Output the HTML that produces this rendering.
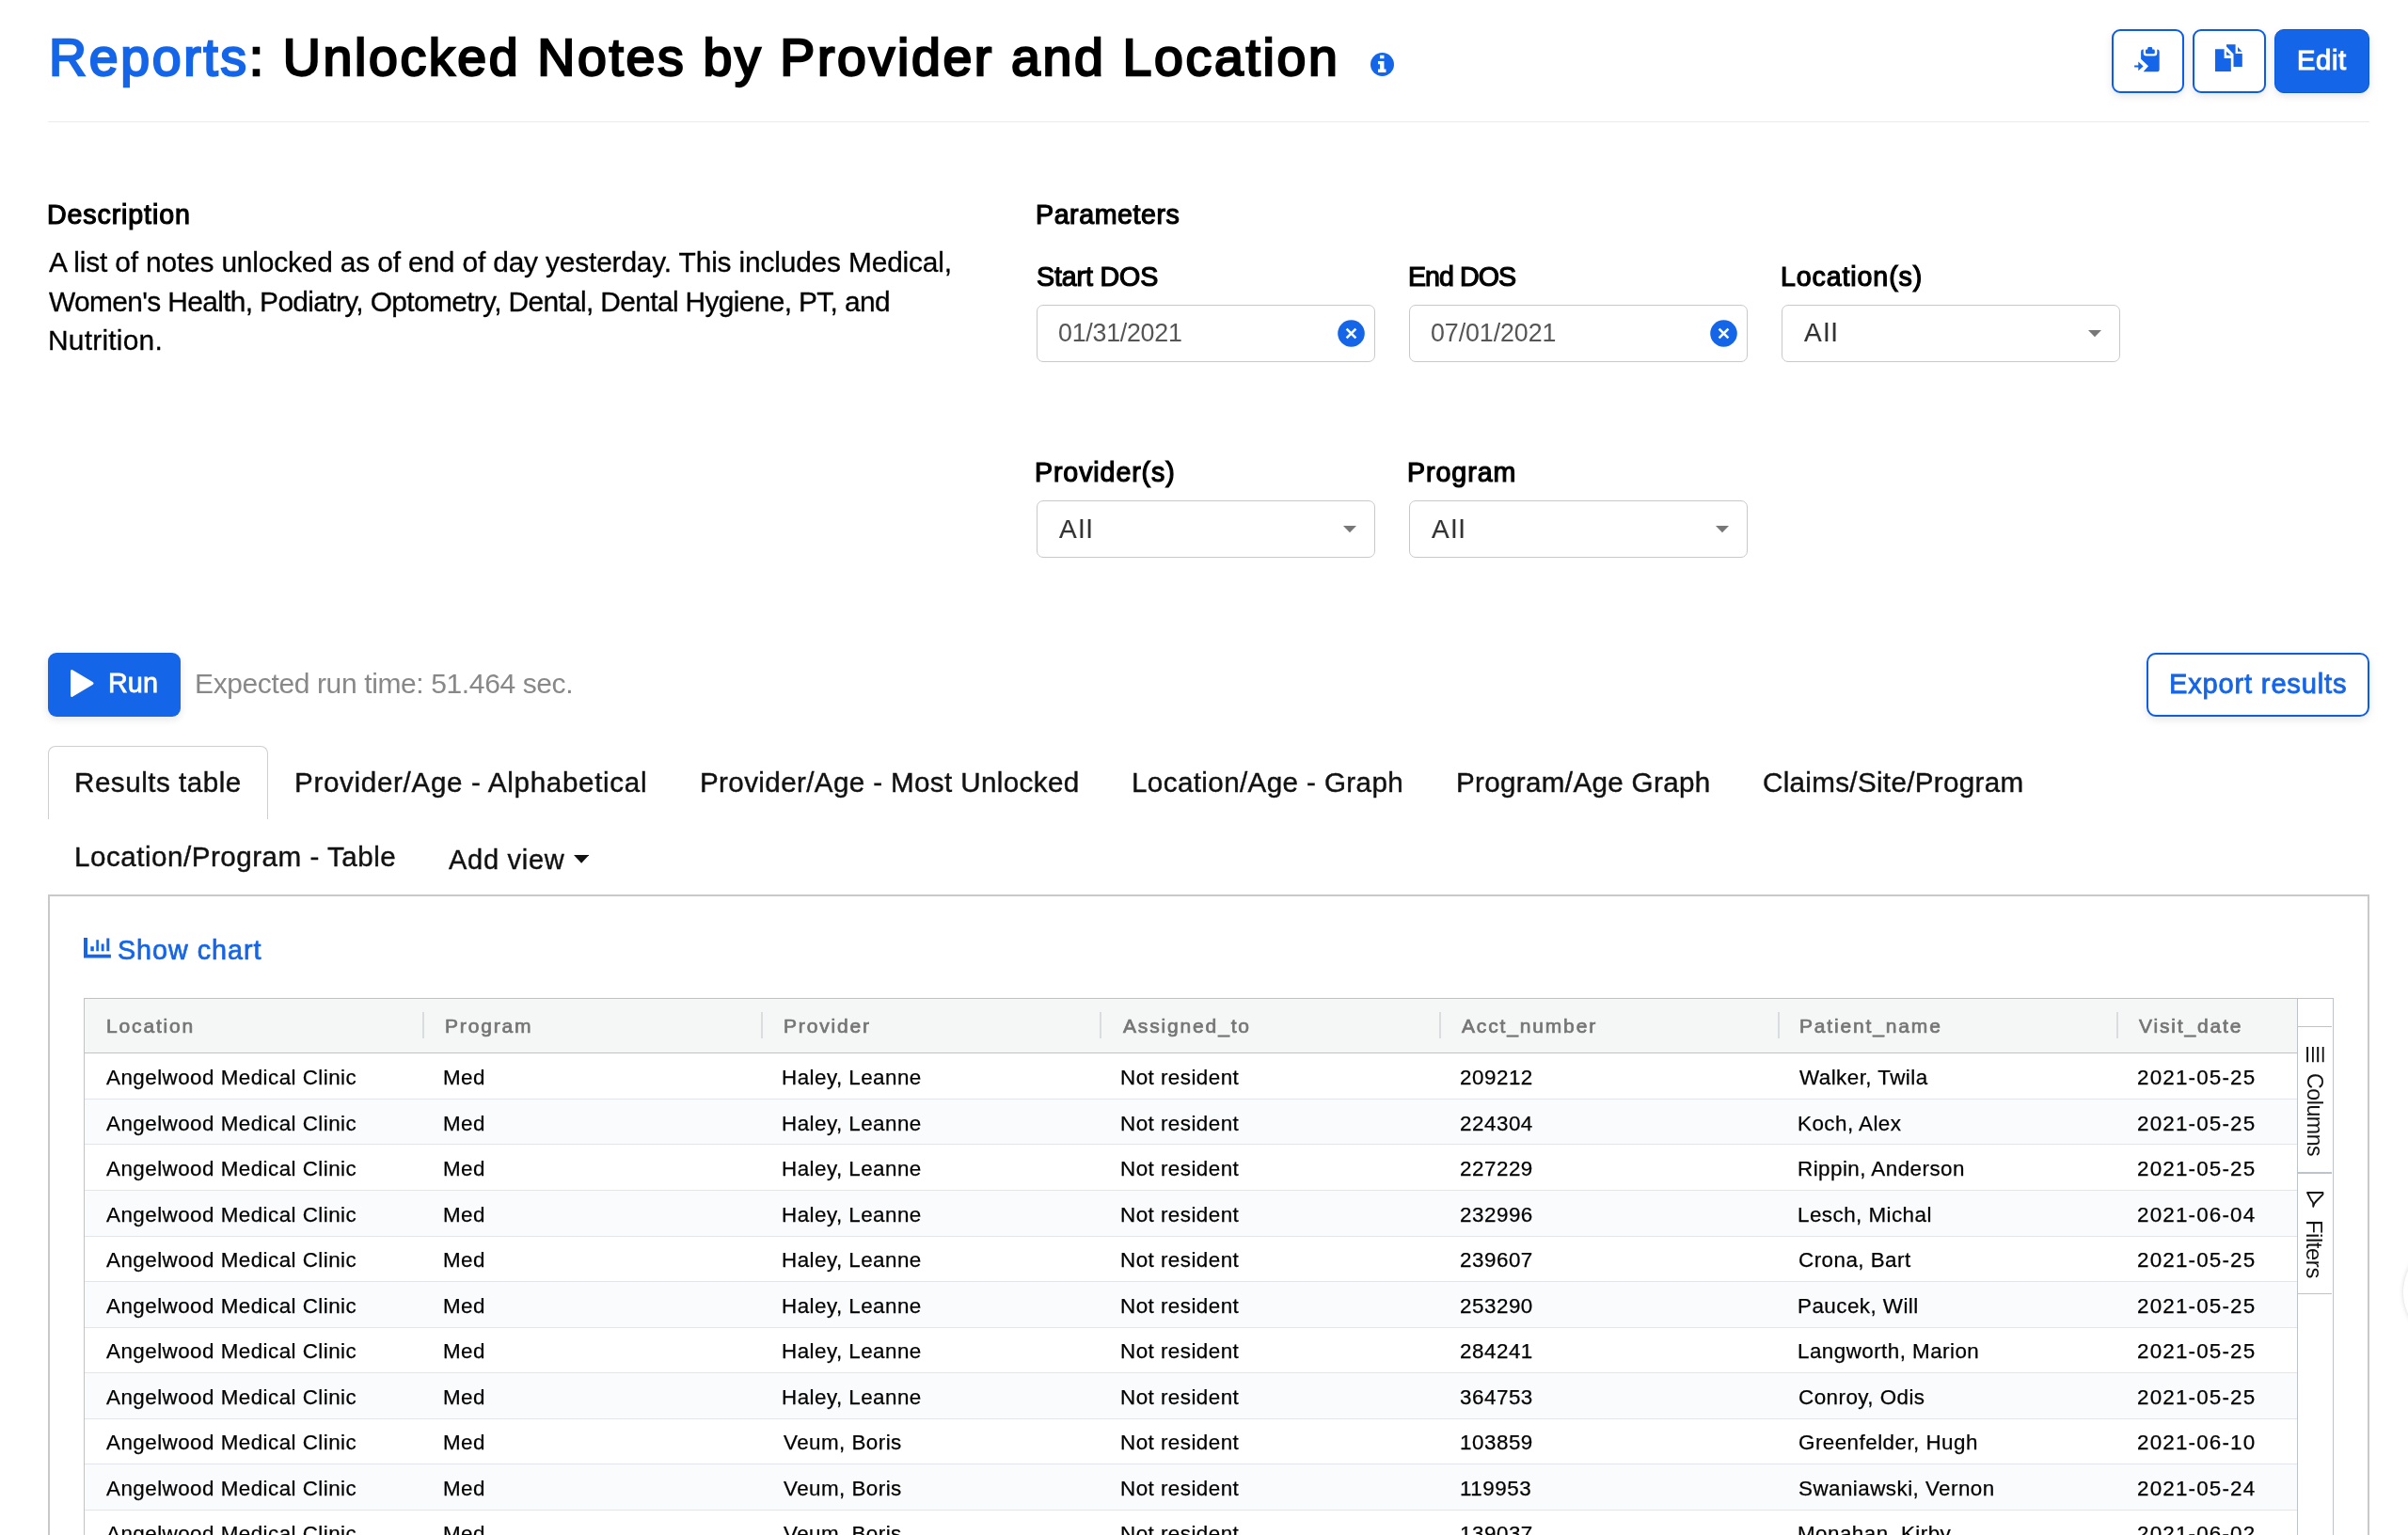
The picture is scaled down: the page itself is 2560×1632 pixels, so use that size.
<!DOCTYPE html>
<html><head><meta charset='utf-8'><style>
html,body{margin:0;padding:0}
body{width:2560px;height:1632px;overflow:hidden;position:relative;background:#fff;font-family:"Liberation Sans",sans-serif}
.t{position:absolute;white-space:pre;font-family:"Liberation Sans",sans-serif;will-change:transform}
</style></head><body>
<div style='position:absolute;left:51px;top:129px;width:2468px;height:1px;background:#ebebeb'></div>
<svg style='position:absolute;left:1457px;top:56px' width='25' height='25' viewBox='0 0 24.4 24.4'>
<circle cx='12.2' cy='12.2' r='12.2' fill='#1565e8'/>
<path fill='#fff' d='M9.8 2.8h4.3v3.4H9.8z M7.8 8.8h6.3v8.4h2v3.2H7.8v-3.2h2v-5.2h-2z'/></svg>
<div style='position:absolute;left:2245px;top:31px;width:73px;height:64px;border:2px solid #0b5ce6;border-radius:9px;background:#fff;box-shadow:0 3px 8px rgba(0,0,0,0.10)'></div>
<div style='position:absolute;left:2331px;top:31px;width:74px;height:64px;border:2px solid #0b5ce6;border-radius:9px;background:#fff;box-shadow:0 3px 8px rgba(0,0,0,0.10)'></div>
<div style='position:absolute;left:2418px;top:31px;width:99px;height:66px;border:1px solid #0a58d6;border-radius:10px;background:#1565e8;box-shadow:0 3px 8px rgba(0,0,0,0.10)'></div>
<svg style='position:absolute;left:2269px;top:49.5px' width='27' height='27' viewBox='0 0 27 27'>
<path fill='#1565e8' d='M9.7 2.6V6.6A3 3 0 0 0 12.7 9.6H21.3A3 3 0 0 0 24.3 6.6V2.6A2.4 2.4 0 0 1 26.7 5V24A2.3 2.3 0 0 1 24.4 26.3H9.6L15 20.3L7.1 12.8V5A2.4 2.4 0 0 1 9.7 2.6Z'/>
<path fill='#1565e8' d='M13.2 2.6H14.2V1.4A1.4 1.4 0 0 1 15.6 0H17.8A1.4 1.4 0 0 1 19.2 1.4V2.6H20.4A1.4 1.4 0 0 1 21.8 4V5.9A1.4 1.4 0 0 1 20.4 7.3H13.4A1.4 1.4 0 0 1 12 5.9V3.8A1.2 1.2 0 0 1 13.2 2.6Z'/>
<path fill='#1565e8' d='M0.1 19.4H6.2V21.6H0.1Z M4.3 15.6L9.6 20.5L4.3 25.3Z'/></svg>
<svg style='position:absolute;left:2355.3px;top:47px' width='29' height='29' viewBox='0 0 29 29'>
<path fill='#1565e8' d='M0 5.2H9.6V15.1H16.8V29H0Z M12 7.8L16.7 11.8H12Z'/>
<path fill='#1565e8' d='M12 0.3H21.6V9.9H28.8V24H19.5V10.5L12 2.4Z M24 3.1L28.5 7.8H24Z'/></svg>
<div style='position:absolute;border:1px solid #c9c9c9;border-radius:7px;background:#fff;box-sizing:border-box;left:1102px;top:324px;width:360px;height:61px'></div>
<div style='position:absolute;border:1px solid #c9c9c9;border-radius:7px;background:#fff;box-sizing:border-box;left:1498px;top:324px;width:360px;height:61px'></div>
<div style='position:absolute;border:1px solid #c9c9c9;border-radius:7px;background:#fff;box-sizing:border-box;left:1894px;top:324px;width:360px;height:61px'></div>
<div style='position:absolute;border:1px solid #c9c9c9;border-radius:7px;background:#fff;box-sizing:border-box;left:1102px;top:532px;width:360px;height:61px'></div>
<div style='position:absolute;border:1px solid #c9c9c9;border-radius:7px;background:#fff;box-sizing:border-box;left:1498px;top:532px;width:360px;height:61px'></div>
<svg style='position:absolute;left:1422.0px;top:340px' width='29' height='29' viewBox='0 0 29 29'>
<circle cx='14.5' cy='14.5' r='14.3' fill='#1565e8'/><path d='M9.6 9.6L19.4 19.4M19.4 9.6L9.6 19.4' stroke='#fff' stroke-width='2.6'/></svg>
<svg style='position:absolute;left:1818.0px;top:340px' width='29' height='29' viewBox='0 0 29 29'>
<circle cx='14.5' cy='14.5' r='14.3' fill='#1565e8'/><path d='M9.6 9.6L19.4 19.4M19.4 9.6L9.6 19.4' stroke='#fff' stroke-width='2.6'/></svg>
<svg style='position:absolute;left:2219.8px;top:351px' width='14' height='7.5' viewBox='0 0 14 7.5'><path d='M0 0H14L7 7.3Z' fill='#777'/></svg>
<svg style='position:absolute;left:1427.8px;top:559.2px' width='14' height='7.5' viewBox='0 0 14 7.5'><path d='M0 0H14L7 7.3Z' fill='#777'/></svg>
<svg style='position:absolute;left:1823.8px;top:559.2px' width='14' height='7.5' viewBox='0 0 14 7.5'><path d='M0 0H14L7 7.3Z' fill='#777'/></svg>
<svg style='position:absolute;left:609.9px;top:909.2px' width='16.2' height='9' viewBox='0 0 16.2 9'><path d='M0 0H16.2L8.1 8.8Z' fill='#111'/></svg>
<div style='position:absolute;left:51px;top:694px;width:141px;height:68px;border-radius:9px;background:#1565e8;box-shadow:0 3px 8px rgba(0,0,0,0.10)'></div>
<svg style='position:absolute;left:74px;top:711px' width='27' height='31' viewBox='0 0 27 31'><path d='M3.5 1.5 Q1 0 1 3 V28 Q1 31 3.5 29.5 L24.5 17 Q26.5 15.5 24.5 14 Z' fill='#fff'/></svg>
<div style='position:absolute;left:2282px;top:694px;width:233px;height:64px;border:2px solid #0b5ce6;border-radius:10px;background:#fff;box-shadow:0 3px 8px rgba(0,0,0,0.10)'></div>
<div style='position:absolute;left:51px;top:793px;width:232px;height:90px;border:1px solid #cfcfcf;border-bottom:none;border-radius:8px 8px 0 0;background:#fff'></div>
<div style='position:absolute;left:40px;top:871px;width:260px;height:30px;background:#fff'></div>
<div style='position:absolute;left:51px;top:951px;width:2464px;height:800px;border:2px solid #c9c9c9;background:#fff'></div>
<svg style='position:absolute;left:88.9px;top:997px' width='29' height='22' viewBox='0 0 29 22'>
<path fill='#1565e8' d='M0 0H4V17.8H28.9V21.6H0Z M7.3 9.2H10.8V14.3H7.3Z M13.3 2.2H15.9V14.3H13.3Z M18.7 6.5H21.6V14.3H18.7Z M24.3 0.5H27.3V14.3H24.3Z'/></svg>
<div style='position:absolute;left:89px;top:1061px;width:2390px;height:700px;border:1px solid #bdc3c8;background:#fff'></div>
<div style='position:absolute;left:90px;top:1062px;width:2352px;height:57px;background:#f5f6f6'></div>
<div style='position:absolute;left:90px;top:1119px;width:2352px;height:1px;background:#bdc3c8'></div>
<div style='position:absolute;left:449px;top:1076px;width:2px;height:28px;background:#d9dde0'></div>
<div style='position:absolute;left:809px;top:1076px;width:2px;height:28px;background:#d9dde0'></div>
<div style='position:absolute;left:1169px;top:1076px;width:2px;height:28px;background:#d9dde0'></div>
<div style='position:absolute;left:1530px;top:1076px;width:2px;height:28px;background:#d9dde0'></div>
<div style='position:absolute;left:1890px;top:1076px;width:2px;height:28px;background:#d9dde0'></div>
<div style='position:absolute;left:2250px;top:1076px;width:2px;height:28px;background:#d9dde0'></div>
<div style='position:absolute;left:90px;top:1168px;width:2352px;height:1px;background:#e2e5e9'></div>
<div style='position:absolute;left:90px;top:1169px;width:2352px;height:47px;background:#fafbfd'></div>
<div style='position:absolute;left:90px;top:1216px;width:2352px;height:1px;background:#e2e5e9'></div>
<div style='position:absolute;left:90px;top:1265px;width:2352px;height:1px;background:#e2e5e9'></div>
<div style='position:absolute;left:90px;top:1266px;width:2352px;height:48px;background:#fafbfd'></div>
<div style='position:absolute;left:90px;top:1314px;width:2352px;height:1px;background:#e2e5e9'></div>
<div style='position:absolute;left:90px;top:1362px;width:2352px;height:1px;background:#e2e5e9'></div>
<div style='position:absolute;left:90px;top:1363px;width:2352px;height:48px;background:#fafbfd'></div>
<div style='position:absolute;left:90px;top:1411px;width:2352px;height:1px;background:#e2e5e9'></div>
<div style='position:absolute;left:90px;top:1459px;width:2352px;height:1px;background:#e2e5e9'></div>
<div style='position:absolute;left:90px;top:1460px;width:2352px;height:48px;background:#fafbfd'></div>
<div style='position:absolute;left:90px;top:1508px;width:2352px;height:1px;background:#e2e5e9'></div>
<div style='position:absolute;left:90px;top:1556px;width:2352px;height:1px;background:#e2e5e9'></div>
<div style='position:absolute;left:90px;top:1557px;width:2352px;height:48px;background:#fafbfd'></div>
<div style='position:absolute;left:90px;top:1605px;width:2352px;height:1px;background:#e2e5e9'></div>
<div style='position:absolute;left:90px;top:1653px;width:2352px;height:1px;background:#e2e5e9'></div>
<div style='position:absolute;left:2442px;top:1062px;width:37px;height:700px;background:#fff;border-left:1px solid #bdc3c8'></div>
<div style='position:absolute;left:2443px;top:1091px;width:36px;height:1px;background:#bdc3c8'></div>
<div style='position:absolute;left:2443px;top:1246px;width:36px;height:2px;background:#bdc3c8'></div>
<div style='position:absolute;left:2443px;top:1375px;width:36px;height:1px;background:#bdc3c8'></div>
<svg style='position:absolute;left:2452px;top:1112.5px' width='19' height='17' viewBox='0 0 19 17'><path d='M0.1 0H2.1V16.3H0.1Z M6 0H7.8V16.3H6Z M11.2 0H13.2V16.3H11.2Z M16.8 0H18.6V16.3H16.8Z' fill='#111'/></svg>
<svg style='position:absolute;left:2452px;top:1267px' width='19' height='17' viewBox='0 0 19 17'><path d='M1 1 L17.5 1 L17.5 2.8 L11 9.5 Q9.5 11 8.5 12.5 L7.2 15.8 L7.2 12.5 Q6.8 10.5 5 8.8 Z' fill='none' stroke='#111' stroke-width='1.8' stroke-linejoin='round'/></svg>
<div style='position:absolute;left:2555px;top:1319px;width:110px;height:110px;border-radius:50%;background:#fff;box-shadow:0 0 5px rgba(0,0,0,0.16)'></div>
<div class='t' style='left:51.70px;top:27.85px;font-weight:normal;font-size:55.5px;line-height:67px;letter-spacing:2.626px;color:#000;-webkit-text-stroke:2.3px #000;'><span style='color:#1565e8;-webkit-text-stroke-color:#1565e8'>Reports</span>: Unlocked Notes by Provider and Location</div>
<div class='t' style='left:2442.00px;top:46.55px;font-weight:normal;font-size:29.1px;line-height:35px;letter-spacing:0.667px;color:#fff;-webkit-text-stroke:1.1px #fff;'>Edit</div>
<div class='t' style='left:50.20px;top:211.40px;font-weight:normal;font-size:28.6px;line-height:34px;letter-spacing:0.880px;color:#000;-webkit-text-stroke:1.2px #000;'>Description</div>
<div class='t' style='left:51.50px;top:260.65px;font-weight:normal;font-size:29.9px;line-height:36px;letter-spacing:-0.168px;color:#000;-webkit-text-stroke:0.3px #000;'>A list of notes unlocked as of end of day yesterday. This includes Medical,</div>
<div class='t' style='left:51.80px;top:302.65px;font-weight:normal;font-size:29.9px;line-height:36px;letter-spacing:-0.645px;color:#000;-webkit-text-stroke:0.3px #000;'>Women&#x27;s Health, Podiatry, Optometry, Dental, Dental Hygiene, PT, and</div>
<div class='t' style='left:51.10px;top:343.75px;font-weight:normal;font-size:29.9px;line-height:36px;letter-spacing:0.233px;color:#000;-webkit-text-stroke:0.3px #000;'>Nutrition.</div>
<div class='t' style='left:1101.00px;top:211.10px;font-weight:normal;font-size:28.6px;line-height:34px;letter-spacing:0.567px;color:#000;-webkit-text-stroke:1.2px #000;'>Parameters</div>
<div class='t' style='left:1101.90px;top:276.60px;font-weight:normal;font-size:28.6px;line-height:34px;letter-spacing:-0.125px;color:#000;-webkit-text-stroke:1.2px #000;'>Start DOS</div>
<div class='t' style='left:1497.00px;top:276.60px;font-weight:normal;font-size:28.6px;line-height:34px;letter-spacing:-0.967px;color:#000;-webkit-text-stroke:1.2px #000;'>End DOS</div>
<div class='t' style='left:1893.10px;top:276.60px;font-weight:normal;font-size:28.6px;line-height:34px;letter-spacing:0.880px;color:#000;-webkit-text-stroke:1.2px #000;'>Location(s)</div>
<div class='t' style='left:1100.20px;top:485.10px;font-weight:normal;font-size:28.6px;line-height:34px;letter-spacing:0.890px;color:#000;-webkit-text-stroke:1.2px #000;'>Provider(s)</div>
<div class='t' style='left:1496.40px;top:485.10px;font-weight:normal;font-size:28.6px;line-height:34px;letter-spacing:0.950px;color:#000;-webkit-text-stroke:1.2px #000;'>Program</div>
<div class='t' style='left:1125.00px;top:337.90px;font-weight:normal;font-size:26.8px;line-height:32px;letter-spacing:-0.256px;color:#555;'>01/31/2021</div>
<div class='t' style='left:1520.90px;top:337.90px;font-weight:normal;font-size:26.8px;line-height:32px;letter-spacing:-0.078px;color:#555;'>07/01/2021</div>
<div class='t' style='left:1917.60px;top:337.00px;font-weight:normal;font-size:28.0px;line-height:34px;letter-spacing:2.000px;color:#333;-webkit-text-stroke:0.2px #333;'>All</div>
<div class='t' style='left:1125.90px;top:545.50px;font-weight:normal;font-size:28.0px;line-height:34px;letter-spacing:2.000px;color:#333;-webkit-text-stroke:0.2px #333;'>All</div>
<div class='t' style='left:1522.10px;top:545.50px;font-weight:normal;font-size:28.0px;line-height:34px;letter-spacing:2.000px;color:#333;-webkit-text-stroke:0.2px #333;'>All</div>
<div class='t' style='left:114.50px;top:709.40px;font-weight:normal;font-size:28.8px;line-height:35px;letter-spacing:0.050px;color:#fff;-webkit-text-stroke:0.8px #fff;'>Run</div>
<div class='t' style='left:207.00px;top:709.00px;font-weight:normal;font-size:30.0px;line-height:36px;letter-spacing:-0.379px;color:#888;'>Expected run time: 51.464 sec.</div>
<div class='t' style='left:2305.90px;top:709.80px;font-weight:normal;font-size:29.1px;line-height:35px;letter-spacing:0.815px;color:#1565e8;-webkit-text-stroke:0.8px #1565e8;'>Export results</div>
<div class='t' style='left:79.20px;top:814.10px;font-weight:normal;font-size:29.6px;line-height:36px;letter-spacing:0.517px;color:#111;-webkit-text-stroke:0.4px #111;'>Results table</div>
<div class='t' style='left:312.80px;top:814.10px;font-weight:normal;font-size:29.6px;line-height:36px;letter-spacing:0.673px;color:#111;-webkit-text-stroke:0.4px #111;'>Provider/Age - Alphabetical</div>
<div class='t' style='left:743.90px;top:814.10px;font-weight:normal;font-size:29.6px;line-height:36px;letter-spacing:0.374px;color:#111;-webkit-text-stroke:0.4px #111;'>Provider/Age - Most Unlocked</div>
<div class='t' style='left:1203.10px;top:814.10px;font-weight:normal;font-size:29.6px;line-height:36px;letter-spacing:0.389px;color:#111;-webkit-text-stroke:0.4px #111;'>Location/Age - Graph</div>
<div class='t' style='left:1547.50px;top:814.10px;font-weight:normal;font-size:29.6px;line-height:36px;letter-spacing:0.337px;color:#111;-webkit-text-stroke:0.4px #111;'>Program/Age Graph</div>
<div class='t' style='left:1874.40px;top:814.10px;font-weight:normal;font-size:29.6px;line-height:36px;letter-spacing:0.322px;color:#111;-webkit-text-stroke:0.4px #111;'>Claims/Site/Program</div>
<div class='t' style='left:79.20px;top:893.00px;font-weight:normal;font-size:29.6px;line-height:36px;letter-spacing:0.509px;color:#111;-webkit-text-stroke:0.4px #111;'>Location/Program - Table</div>
<div class='t' style='left:477.20px;top:896.60px;font-weight:normal;font-size:29.0px;line-height:35px;letter-spacing:0.729px;color:#111;-webkit-text-stroke:0.4px #111;'>Add view</div>
<div class='t' style='left:124.90px;top:993.35px;font-weight:normal;font-size:28.7px;line-height:34px;letter-spacing:0.989px;color:#1565e8;-webkit-text-stroke:0.7px #1565e8;'>Show chart</div>
<div class='t' style='left:112.50px;top:1077.65px;font-weight:normal;font-size:21.0px;line-height:25px;letter-spacing:1.843px;color:#757575;-webkit-text-stroke:0.7px #757575;'>Location</div>
<div class='t' style='left:472.54px;top:1077.65px;font-weight:normal;font-size:21.0px;line-height:25px;letter-spacing:1.843px;color:#757575;-webkit-text-stroke:0.7px #757575;'>Program</div>
<div class='t' style='left:832.58px;top:1077.65px;font-weight:normal;font-size:21.0px;line-height:25px;letter-spacing:1.843px;color:#757575;-webkit-text-stroke:0.7px #757575;'>Provider</div>
<div class='t' style='left:1193.62px;top:1077.65px;font-weight:normal;font-size:21.0px;line-height:25px;letter-spacing:1.843px;color:#757575;-webkit-text-stroke:0.7px #757575;'>Assigned_to</div>
<div class='t' style='left:1553.66px;top:1077.65px;font-weight:normal;font-size:21.0px;line-height:25px;letter-spacing:1.843px;color:#757575;-webkit-text-stroke:0.7px #757575;'>Acct_number</div>
<div class='t' style='left:1912.70px;top:1077.65px;font-weight:normal;font-size:21.0px;line-height:25px;letter-spacing:1.843px;color:#757575;-webkit-text-stroke:0.7px #757575;'>Patient_name</div>
<div class='t' style='left:2273.74px;top:1077.65px;font-weight:normal;font-size:21.0px;line-height:25px;letter-spacing:1.843px;color:#757575;-webkit-text-stroke:0.7px #757575;'>Visit_date</div>
<div class='t' style='left:112.90px;top:1131.88px;font-weight:normal;font-size:22.4px;line-height:27px;letter-spacing:0.461px;color:#000;-webkit-text-stroke:0.25px #000;'>Angelwood Medical Clinic</div>
<div class='t' style='left:470.94px;top:1131.88px;font-weight:normal;font-size:22.4px;line-height:27px;letter-spacing:0.461px;color:#000;-webkit-text-stroke:0.25px #000;'>Med</div>
<div class='t' style='left:830.98px;top:1131.88px;font-weight:normal;font-size:22.4px;line-height:27px;letter-spacing:0.461px;color:#000;-webkit-text-stroke:0.25px #000;'>Haley, Leanne</div>
<div class='t' style='left:1191.02px;top:1131.88px;font-weight:normal;font-size:22.4px;line-height:27px;letter-spacing:0.461px;color:#000;-webkit-text-stroke:0.25px #000;'>Not resident</div>
<div class='t' style='left:1552.06px;top:1131.88px;font-weight:normal;font-size:22.4px;line-height:27px;letter-spacing:0.520px;color:#000;-webkit-text-stroke:0.25px #000;'>209212</div>
<div class='t' style='left:1913.10px;top:1131.88px;font-weight:normal;font-size:22.4px;line-height:27px;letter-spacing:0.461px;color:#000;-webkit-text-stroke:0.25px #000;'>Walker, Twila</div>
<div class='t' style='left:2272.14px;top:1131.88px;font-weight:normal;font-size:22.4px;line-height:27px;letter-spacing:1.178px;color:#000;-webkit-text-stroke:0.25px #000;'>2021-05-25</div>
<div class='t' style='left:112.90px;top:1180.88px;font-weight:normal;font-size:22.4px;line-height:27px;letter-spacing:0.461px;color:#000;-webkit-text-stroke:0.25px #000;'>Angelwood Medical Clinic</div>
<div class='t' style='left:470.94px;top:1180.88px;font-weight:normal;font-size:22.4px;line-height:27px;letter-spacing:0.461px;color:#000;-webkit-text-stroke:0.25px #000;'>Med</div>
<div class='t' style='left:830.98px;top:1180.88px;font-weight:normal;font-size:22.4px;line-height:27px;letter-spacing:0.461px;color:#000;-webkit-text-stroke:0.25px #000;'>Haley, Leanne</div>
<div class='t' style='left:1191.02px;top:1180.88px;font-weight:normal;font-size:22.4px;line-height:27px;letter-spacing:0.461px;color:#000;-webkit-text-stroke:0.25px #000;'>Not resident</div>
<div class='t' style='left:1552.06px;top:1180.88px;font-weight:normal;font-size:22.4px;line-height:27px;letter-spacing:0.520px;color:#000;-webkit-text-stroke:0.25px #000;'>224304</div>
<div class='t' style='left:1911.10px;top:1180.88px;font-weight:normal;font-size:22.4px;line-height:27px;letter-spacing:0.461px;color:#000;-webkit-text-stroke:0.25px #000;'>Koch, Alex</div>
<div class='t' style='left:2272.14px;top:1180.88px;font-weight:normal;font-size:22.4px;line-height:27px;letter-spacing:1.178px;color:#000;-webkit-text-stroke:0.25px #000;'>2021-05-25</div>
<div class='t' style='left:112.90px;top:1228.88px;font-weight:normal;font-size:22.4px;line-height:27px;letter-spacing:0.461px;color:#000;-webkit-text-stroke:0.25px #000;'>Angelwood Medical Clinic</div>
<div class='t' style='left:470.94px;top:1228.88px;font-weight:normal;font-size:22.4px;line-height:27px;letter-spacing:0.461px;color:#000;-webkit-text-stroke:0.25px #000;'>Med</div>
<div class='t' style='left:830.98px;top:1228.88px;font-weight:normal;font-size:22.4px;line-height:27px;letter-spacing:0.461px;color:#000;-webkit-text-stroke:0.25px #000;'>Haley, Leanne</div>
<div class='t' style='left:1191.02px;top:1228.88px;font-weight:normal;font-size:22.4px;line-height:27px;letter-spacing:0.461px;color:#000;-webkit-text-stroke:0.25px #000;'>Not resident</div>
<div class='t' style='left:1552.06px;top:1228.88px;font-weight:normal;font-size:22.4px;line-height:27px;letter-spacing:0.520px;color:#000;-webkit-text-stroke:0.25px #000;'>227229</div>
<div class='t' style='left:1911.10px;top:1228.88px;font-weight:normal;font-size:22.4px;line-height:27px;letter-spacing:0.461px;color:#000;-webkit-text-stroke:0.25px #000;'>Rippin, Anderson</div>
<div class='t' style='left:2272.14px;top:1228.88px;font-weight:normal;font-size:22.4px;line-height:27px;letter-spacing:1.178px;color:#000;-webkit-text-stroke:0.25px #000;'>2021-05-25</div>
<div class='t' style='left:112.90px;top:1277.88px;font-weight:normal;font-size:22.4px;line-height:27px;letter-spacing:0.461px;color:#000;-webkit-text-stroke:0.25px #000;'>Angelwood Medical Clinic</div>
<div class='t' style='left:470.94px;top:1277.88px;font-weight:normal;font-size:22.4px;line-height:27px;letter-spacing:0.461px;color:#000;-webkit-text-stroke:0.25px #000;'>Med</div>
<div class='t' style='left:830.98px;top:1277.88px;font-weight:normal;font-size:22.4px;line-height:27px;letter-spacing:0.461px;color:#000;-webkit-text-stroke:0.25px #000;'>Haley, Leanne</div>
<div class='t' style='left:1191.02px;top:1277.88px;font-weight:normal;font-size:22.4px;line-height:27px;letter-spacing:0.461px;color:#000;-webkit-text-stroke:0.25px #000;'>Not resident</div>
<div class='t' style='left:1552.06px;top:1277.88px;font-weight:normal;font-size:22.4px;line-height:27px;letter-spacing:0.520px;color:#000;-webkit-text-stroke:0.25px #000;'>232996</div>
<div class='t' style='left:1911.10px;top:1277.88px;font-weight:normal;font-size:22.4px;line-height:27px;letter-spacing:0.461px;color:#000;-webkit-text-stroke:0.25px #000;'>Lesch, Michal</div>
<div class='t' style='left:2272.14px;top:1277.88px;font-weight:normal;font-size:22.4px;line-height:27px;letter-spacing:1.178px;color:#000;-webkit-text-stroke:0.25px #000;'>2021-06-04</div>
<div class='t' style='left:112.90px;top:1325.88px;font-weight:normal;font-size:22.4px;line-height:27px;letter-spacing:0.461px;color:#000;-webkit-text-stroke:0.25px #000;'>Angelwood Medical Clinic</div>
<div class='t' style='left:470.94px;top:1325.88px;font-weight:normal;font-size:22.4px;line-height:27px;letter-spacing:0.461px;color:#000;-webkit-text-stroke:0.25px #000;'>Med</div>
<div class='t' style='left:830.98px;top:1325.88px;font-weight:normal;font-size:22.4px;line-height:27px;letter-spacing:0.461px;color:#000;-webkit-text-stroke:0.25px #000;'>Haley, Leanne</div>
<div class='t' style='left:1191.02px;top:1325.88px;font-weight:normal;font-size:22.4px;line-height:27px;letter-spacing:0.461px;color:#000;-webkit-text-stroke:0.25px #000;'>Not resident</div>
<div class='t' style='left:1552.06px;top:1325.88px;font-weight:normal;font-size:22.4px;line-height:27px;letter-spacing:0.520px;color:#000;-webkit-text-stroke:0.25px #000;'>239607</div>
<div class='t' style='left:1912.10px;top:1325.88px;font-weight:normal;font-size:22.4px;line-height:27px;letter-spacing:0.461px;color:#000;-webkit-text-stroke:0.25px #000;'>Crona, Bart</div>
<div class='t' style='left:2272.14px;top:1325.88px;font-weight:normal;font-size:22.4px;line-height:27px;letter-spacing:1.178px;color:#000;-webkit-text-stroke:0.25px #000;'>2021-05-25</div>
<div class='t' style='left:112.90px;top:1374.88px;font-weight:normal;font-size:22.4px;line-height:27px;letter-spacing:0.461px;color:#000;-webkit-text-stroke:0.25px #000;'>Angelwood Medical Clinic</div>
<div class='t' style='left:470.94px;top:1374.88px;font-weight:normal;font-size:22.4px;line-height:27px;letter-spacing:0.461px;color:#000;-webkit-text-stroke:0.25px #000;'>Med</div>
<div class='t' style='left:830.98px;top:1374.88px;font-weight:normal;font-size:22.4px;line-height:27px;letter-spacing:0.461px;color:#000;-webkit-text-stroke:0.25px #000;'>Haley, Leanne</div>
<div class='t' style='left:1191.02px;top:1374.88px;font-weight:normal;font-size:22.4px;line-height:27px;letter-spacing:0.461px;color:#000;-webkit-text-stroke:0.25px #000;'>Not resident</div>
<div class='t' style='left:1552.06px;top:1374.88px;font-weight:normal;font-size:22.4px;line-height:27px;letter-spacing:0.520px;color:#000;-webkit-text-stroke:0.25px #000;'>253290</div>
<div class='t' style='left:1911.10px;top:1374.88px;font-weight:normal;font-size:22.4px;line-height:27px;letter-spacing:0.461px;color:#000;-webkit-text-stroke:0.25px #000;'>Paucek, Will</div>
<div class='t' style='left:2272.14px;top:1374.88px;font-weight:normal;font-size:22.4px;line-height:27px;letter-spacing:1.178px;color:#000;-webkit-text-stroke:0.25px #000;'>2021-05-25</div>
<div class='t' style='left:112.90px;top:1422.88px;font-weight:normal;font-size:22.4px;line-height:27px;letter-spacing:0.461px;color:#000;-webkit-text-stroke:0.25px #000;'>Angelwood Medical Clinic</div>
<div class='t' style='left:470.94px;top:1422.88px;font-weight:normal;font-size:22.4px;line-height:27px;letter-spacing:0.461px;color:#000;-webkit-text-stroke:0.25px #000;'>Med</div>
<div class='t' style='left:830.98px;top:1422.88px;font-weight:normal;font-size:22.4px;line-height:27px;letter-spacing:0.461px;color:#000;-webkit-text-stroke:0.25px #000;'>Haley, Leanne</div>
<div class='t' style='left:1191.02px;top:1422.88px;font-weight:normal;font-size:22.4px;line-height:27px;letter-spacing:0.461px;color:#000;-webkit-text-stroke:0.25px #000;'>Not resident</div>
<div class='t' style='left:1552.06px;top:1422.88px;font-weight:normal;font-size:22.4px;line-height:27px;letter-spacing:0.520px;color:#000;-webkit-text-stroke:0.25px #000;'>284241</div>
<div class='t' style='left:1911.10px;top:1422.88px;font-weight:normal;font-size:22.4px;line-height:27px;letter-spacing:0.461px;color:#000;-webkit-text-stroke:0.25px #000;'>Langworth, Marion</div>
<div class='t' style='left:2272.14px;top:1422.88px;font-weight:normal;font-size:22.4px;line-height:27px;letter-spacing:1.178px;color:#000;-webkit-text-stroke:0.25px #000;'>2021-05-25</div>
<div class='t' style='left:112.90px;top:1471.88px;font-weight:normal;font-size:22.4px;line-height:27px;letter-spacing:0.461px;color:#000;-webkit-text-stroke:0.25px #000;'>Angelwood Medical Clinic</div>
<div class='t' style='left:470.94px;top:1471.88px;font-weight:normal;font-size:22.4px;line-height:27px;letter-spacing:0.461px;color:#000;-webkit-text-stroke:0.25px #000;'>Med</div>
<div class='t' style='left:830.98px;top:1471.88px;font-weight:normal;font-size:22.4px;line-height:27px;letter-spacing:0.461px;color:#000;-webkit-text-stroke:0.25px #000;'>Haley, Leanne</div>
<div class='t' style='left:1191.02px;top:1471.88px;font-weight:normal;font-size:22.4px;line-height:27px;letter-spacing:0.461px;color:#000;-webkit-text-stroke:0.25px #000;'>Not resident</div>
<div class='t' style='left:1552.06px;top:1471.88px;font-weight:normal;font-size:22.4px;line-height:27px;letter-spacing:0.520px;color:#000;-webkit-text-stroke:0.25px #000;'>364753</div>
<div class='t' style='left:1912.10px;top:1471.88px;font-weight:normal;font-size:22.4px;line-height:27px;letter-spacing:0.461px;color:#000;-webkit-text-stroke:0.25px #000;'>Conroy, Odis</div>
<div class='t' style='left:2272.14px;top:1471.88px;font-weight:normal;font-size:22.4px;line-height:27px;letter-spacing:1.178px;color:#000;-webkit-text-stroke:0.25px #000;'>2021-05-25</div>
<div class='t' style='left:112.90px;top:1519.88px;font-weight:normal;font-size:22.4px;line-height:27px;letter-spacing:0.461px;color:#000;-webkit-text-stroke:0.25px #000;'>Angelwood Medical Clinic</div>
<div class='t' style='left:470.94px;top:1519.88px;font-weight:normal;font-size:22.4px;line-height:27px;letter-spacing:0.461px;color:#000;-webkit-text-stroke:0.25px #000;'>Med</div>
<div class='t' style='left:832.98px;top:1519.88px;font-weight:normal;font-size:22.4px;line-height:27px;letter-spacing:0.461px;color:#000;-webkit-text-stroke:0.25px #000;'>Veum, Boris</div>
<div class='t' style='left:1191.02px;top:1519.88px;font-weight:normal;font-size:22.4px;line-height:27px;letter-spacing:0.461px;color:#000;-webkit-text-stroke:0.25px #000;'>Not resident</div>
<div class='t' style='left:1552.06px;top:1519.88px;font-weight:normal;font-size:22.4px;line-height:27px;letter-spacing:0.520px;color:#000;-webkit-text-stroke:0.25px #000;'>103859</div>
<div class='t' style='left:1912.10px;top:1519.88px;font-weight:normal;font-size:22.4px;line-height:27px;letter-spacing:0.461px;color:#000;-webkit-text-stroke:0.25px #000;'>Greenfelder, Hugh</div>
<div class='t' style='left:2272.14px;top:1519.88px;font-weight:normal;font-size:22.4px;line-height:27px;letter-spacing:1.178px;color:#000;-webkit-text-stroke:0.25px #000;'>2021-06-10</div>
<div class='t' style='left:112.90px;top:1568.88px;font-weight:normal;font-size:22.4px;line-height:27px;letter-spacing:0.461px;color:#000;-webkit-text-stroke:0.25px #000;'>Angelwood Medical Clinic</div>
<div class='t' style='left:470.94px;top:1568.88px;font-weight:normal;font-size:22.4px;line-height:27px;letter-spacing:0.461px;color:#000;-webkit-text-stroke:0.25px #000;'>Med</div>
<div class='t' style='left:832.98px;top:1568.88px;font-weight:normal;font-size:22.4px;line-height:27px;letter-spacing:0.461px;color:#000;-webkit-text-stroke:0.25px #000;'>Veum, Boris</div>
<div class='t' style='left:1191.02px;top:1568.88px;font-weight:normal;font-size:22.4px;line-height:27px;letter-spacing:0.461px;color:#000;-webkit-text-stroke:0.25px #000;'>Not resident</div>
<div class='t' style='left:1552.06px;top:1568.88px;font-weight:normal;font-size:22.4px;line-height:27px;letter-spacing:0.520px;color:#000;-webkit-text-stroke:0.25px #000;'>119953</div>
<div class='t' style='left:1912.10px;top:1568.88px;font-weight:normal;font-size:22.4px;line-height:27px;letter-spacing:0.461px;color:#000;-webkit-text-stroke:0.25px #000;'>Swaniawski, Vernon</div>
<div class='t' style='left:2272.14px;top:1568.88px;font-weight:normal;font-size:22.4px;line-height:27px;letter-spacing:1.178px;color:#000;-webkit-text-stroke:0.25px #000;'>2021-05-24</div>
<div class='t' style='left:112.90px;top:1616.88px;font-weight:normal;font-size:22.4px;line-height:27px;letter-spacing:0.461px;color:#000;-webkit-text-stroke:0.25px #000;'>Angelwood Medical Clinic</div>
<div class='t' style='left:470.94px;top:1616.88px;font-weight:normal;font-size:22.4px;line-height:27px;letter-spacing:0.461px;color:#000;-webkit-text-stroke:0.25px #000;'>Med</div>
<div class='t' style='left:832.98px;top:1616.88px;font-weight:normal;font-size:22.4px;line-height:27px;letter-spacing:0.461px;color:#000;-webkit-text-stroke:0.25px #000;'>Veum, Boris</div>
<div class='t' style='left:1191.02px;top:1616.88px;font-weight:normal;font-size:22.4px;line-height:27px;letter-spacing:0.461px;color:#000;-webkit-text-stroke:0.25px #000;'>Not resident</div>
<div class='t' style='left:1552.06px;top:1616.88px;font-weight:normal;font-size:22.4px;line-height:27px;letter-spacing:0.520px;color:#000;-webkit-text-stroke:0.25px #000;'>139037</div>
<div class='t' style='left:1911.10px;top:1616.88px;font-weight:normal;font-size:22.4px;line-height:27px;letter-spacing:0.461px;color:#000;-webkit-text-stroke:0.25px #000;'>Monahan, Kirby</div>
<div class='t' style='left:2272.14px;top:1616.88px;font-weight:normal;font-size:22.4px;line-height:27px;letter-spacing:1.178px;color:#000;-webkit-text-stroke:0.25px #000;'>2021-06-02</div>
<div class='t' style='left:2474.80px;top:1140.80px;transform-origin:0 0;transform:rotate(90deg);font-weight:normal;font-size:23.2px;line-height:28px;letter-spacing:-0.467px;color:#111;'>Columns</div>
<div class='t' style='left:2475.40px;top:1296.90px;transform-origin:0 0;transform:rotate(90deg);font-weight:normal;font-size:23.8px;line-height:29px;letter-spacing:-0.417px;color:#111;'>Filters</div>
</body></html>
